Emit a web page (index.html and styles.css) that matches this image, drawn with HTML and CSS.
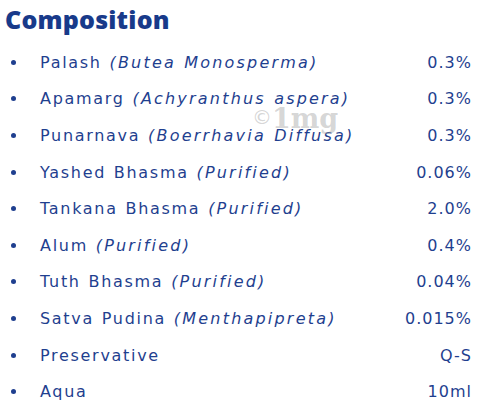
FILE: index.html
```
<!DOCTYPE html>
<html lang="en">
<head>
    <meta charset="UTF-8">
    <meta name="viewport" content="width=device-width, initial-scale=1.0">
    <title>Composition</title>
    <link rel="stylesheet" href="styles.css">
</head>
<body>
    <div class="panel">
        <h1 class="title">Composition</h1>
        <ul class="comp-list">
            <li class="comp-item"><span class="name">Palash <em>(Butea Monosperma)</em></span><span class="qty">0.3%</span></li>
            <li class="comp-item"><span class="name">Apamarg <em>(Achyranthus aspera)</em></span><span class="qty">0.3%</span></li>
            <li class="comp-item"><span class="name">Punarnava <em>(Boerrhavia Diffusa)</em></span><span class="qty">0.3%</span></li>
            <li class="comp-item"><span class="name">Yashed Bhasma <em>(Purified)</em></span><span class="qty">0.06%</span></li>
            <li class="comp-item"><span class="name">Tankana Bhasma <em>(Purified)</em></span><span class="qty">2.0%</span></li>
            <li class="comp-item"><span class="name">Alum <em>(Purified)</em></span><span class="qty">0.4%</span></li>
            <li class="comp-item"><span class="name">Tuth Bhasma <em>(Purified)</em></span><span class="qty">0.04%</span></li>
            <li class="comp-item"><span class="name">Satva Pudina <em>(Menthapipreta)</em></span><span class="qty">0.015%</span></li>
            <li class="comp-item"><span class="name">Preservative</span><span class="qty">Q-S</span></li>
            <li class="comp-item"><span class="name">Aqua</span><span class="qty">10ml</span></li>
        </ul>
        <div class="watermark"><span class="wm-c">©</span>1mg</div>
    </div>
</body>
</html>
```

FILE: styles.css
```
* {
    margin: 0;
    padding: 0;
    box-sizing: border-box;
}

body {
    background-color: #ffffff;
    font-family: 'DejaVu Sans', sans-serif;
    color: #1f3f8f;
}

.panel {
    position: relative;
    width: 480px;
    height: 411px;
    padding: 4px 8px 0 5px;
}

.title {
    font-family: 'Open Sans', sans-serif;
    font-size: 25px;
    font-weight: 800;
    color: #183a8a;
    line-height: 30px;
    letter-spacing: 0.2px;
}

.comp-list {
    list-style: none;
    margin-top: 10px;
}

.comp-item {
    display: flex;
    align-items: center;
    height: 36.6px;
    font-size: 16px;
    letter-spacing: 1.7px;
    word-spacing: 1px;
}

.comp-item::before {
    content: '';
    width: 5px;
    height: 5px;
    border-radius: 50%;
    background-color: #1f3f8f;
    margin: 0 24px 0 6px;
    flex-shrink: 0;
}

.name {
    flex: 1;
}

.name em {
    font-style: italic;
    letter-spacing: 2.2px;
}

.qty {
    text-align: right;
    letter-spacing: 1px;
}

.watermark {
    position: absolute;
    left: 252px;
    top: 105px;
    font-family: 'DejaVu Serif', serif;
    font-size: 27px;
    line-height: 1;
    font-weight: bold;
    color: rgba(150, 150, 150, 0.4);
}

.wm-c {
    font-family: 'DejaVu Sans', sans-serif;
    font-weight: normal;
    font-size: 20px;
    vertical-align: 4px;
}
```
